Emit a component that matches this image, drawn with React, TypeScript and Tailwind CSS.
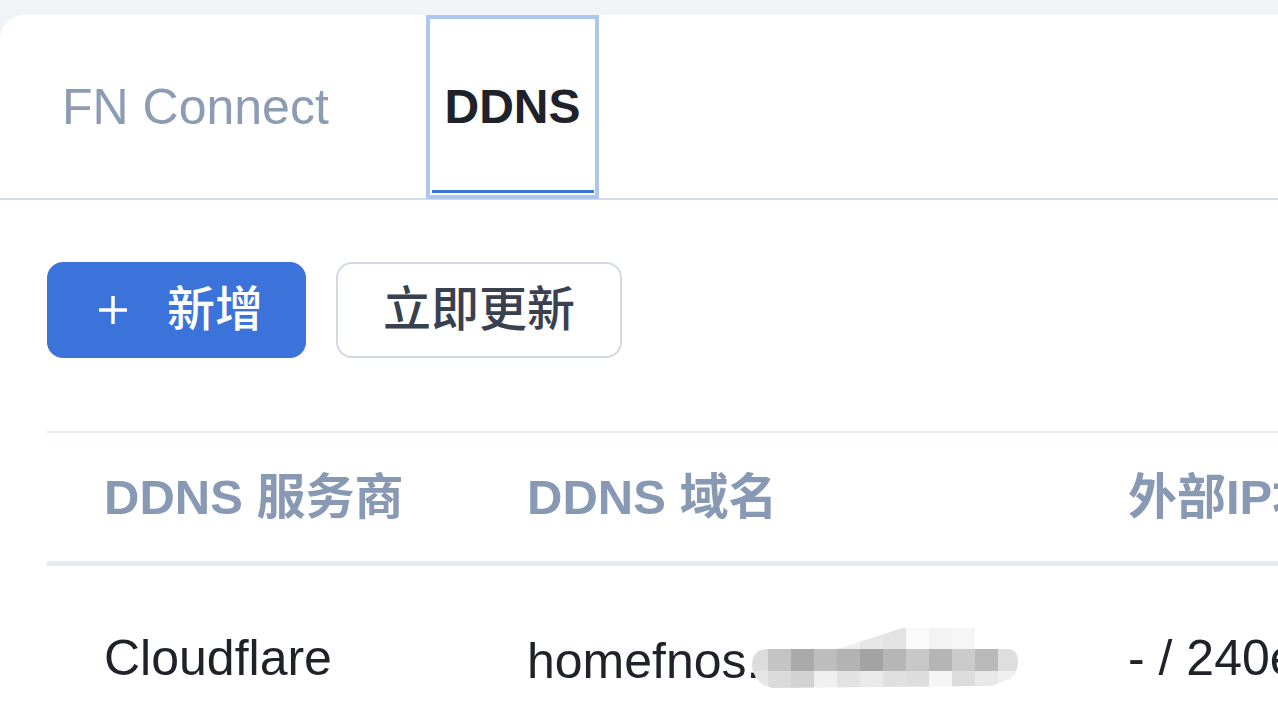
const blobMid = ["#dcdcdc", "#c4c4c4", "#aaaaaa", "#bdbdbd", "#b3b3b3", "#a3a3a3", "#b6b6b6", "#c8c8c8", "#b5b5b5", "#cbcbcb", "#b9b9b9", "#dedede"];
const blobLow = ["#e6e6e6", "#dadada", "#d2d2d2", "#f0f0f0", "#e2e2e2", "#eaeaea", "#e0e0e0", "#dddddd", "#f5f5f5", "#dcdcdc", "#e8e8e8", "#f0f0f0"];
const blobTop = ["", "", "", "#f4f4f4", "#efefef", "#e7e7e7", "#e3e3e3", "#fafafa", "#f3f3f3", "#f6f6f6", "", ""];

function Blur() {
  // pixelated mask over the domain
  return (
    <svg width="268" height="64" viewBox="0 0 268 64" className="-ml-[8px] inline-block align-[-12px]">
      <defs>
        <clipPath id="blob">
          <path d="M0 40 Q0 23 16 23 L85 23 Q120 12 150 2 L220 2 Q250 6 255 23 Q266 23 266 35 Q266 50 255 54 L240 60 L20 62 Q2 58 0 40 Z" />
        </clipPath>
      </defs>
      <g clipPath="url(#blob)">
        {blobTop.map((c, i) =>
          c ? <rect key={"t" + i} x={i * 23 - 7} y={0} width={23} height={23} fill={c} /> : null,
        )}
        {blobMid.map((c, i) => (
          <rect key={"m" + i} x={i * 23 - 7} y={23} width={23} height={22} fill={c} />
        ))}
        {blobLow.map((c, i) => (
          <rect key={"l" + i} x={i * 23 - 7} y={45} width={23} height={19} fill={c} />
        ))}
      </g>
    </svg>
  );
}

export default function App() {
  return (
    <div className="w-[1278px] h-[722px] overflow-hidden bg-[#f2f3f7] pt-[15px] font-['Liberation_Sans','Noto_Sans_CJK_SC',sans-serif]">
      <div className="h-full rounded-tl-[24px] bg-white">
        <div className="flex h-[185px] items-start border-b-2 border-[#d6dce4]">
          <div className="ml-[43px] flex h-[184px] w-[383px] items-center pl-[19px] text-[50px] leading-none text-[#8c9cb2]">
            FN Connect
          </div>
          <div className="relative flex h-[184px] w-[173px] items-center justify-center border-4 border-[#adc7f0] text-[48px] font-bold leading-none text-[#1f2329]">
            DDNS
            <span className="absolute bottom-[2px] left-[2px] right-[1px] h-[3px] bg-[#3a72d8]" />
          </div>
        </div>

        <div className="ml-[47px] mt-[62px] flex gap-[30px]">
          <button className="flex h-[96px] w-[259px] items-center gap-[39px] rounded-[16px] bg-[#3b73da] pl-[51px] text-[48px] font-medium leading-none text-white">
            <svg width="30" height="30" viewBox="0 0 30 30" fill="none" stroke="currentColor" strokeWidth="3.5">
              <path d="M15 1v28M1 15h28" />
            </svg>
            <span>新增</span>
          </button>
          <button className="flex h-[96px] w-[286px] items-center justify-center rounded-[16px] border-2 border-[#d3d9e2] bg-white text-[48px] font-medium leading-none text-[#394050]">
            立即更新
          </button>
        </div>

        <div className="ml-[47px] mt-[73px] border-t-2 border-[#e7ebf2]">
          <div className="flex h-[133px] items-center border-b-[5px] border-[#e5eaf2] text-[49px] font-bold leading-none text-[#8899b3] whitespace-nowrap">
            <div className="w-[480px] shrink-0 pl-[57px]">DDNS 服务商</div>
            <div className="w-[601px] shrink-0">DDNS 域名</div>
            <div className="shrink-0">外部IP地址</div>
          </div>
          <div className="flex h-[184px] items-center text-[50px] leading-none text-[#1f2329] whitespace-nowrap">
            <div className="w-[480px] shrink-0 pl-[57px]">Cloudflare</div>
            <div className="w-[601px] shrink-0">
              homefnos.
              <Blur />
            </div>
            <div className="shrink-0">- / 240e:3b7:3240</div>
          </div>
        </div>
      </div>
    </div>
  );
}
